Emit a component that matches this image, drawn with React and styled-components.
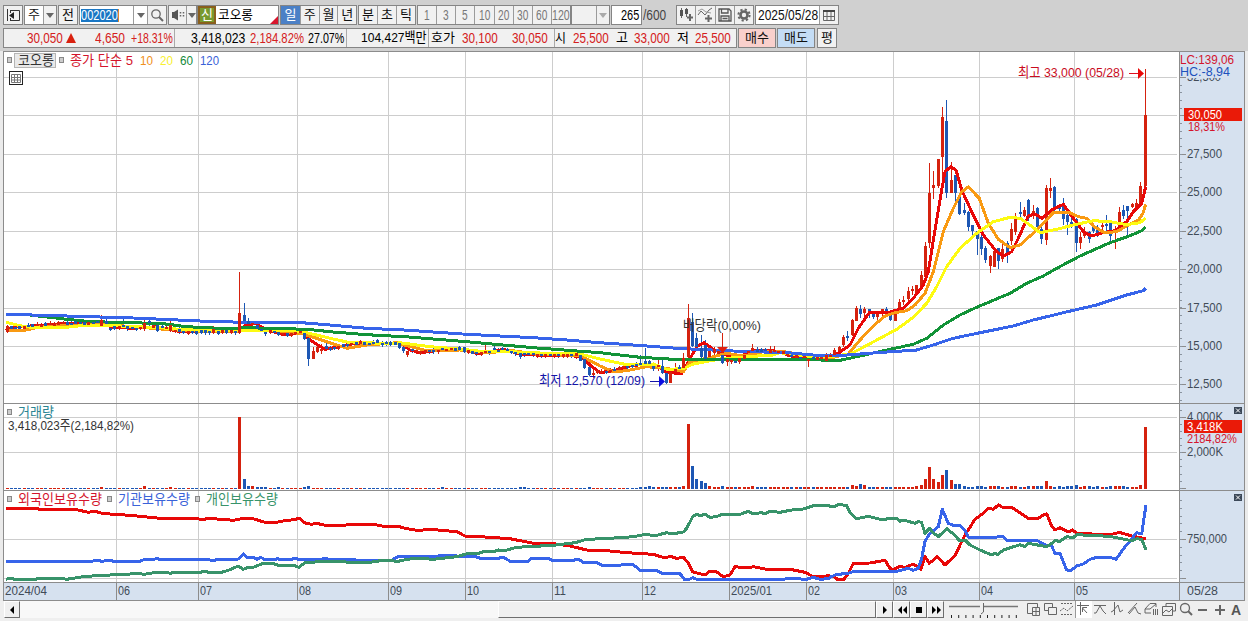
import { useLayoutEffect, useRef, useState } from "react";
import styled, { createGlobalStyle } from "styled-components";

const GlobalStyle = createGlobalStyle`
  * {
    box-sizing: border-box;
  }
  body {
    margin: 0;
    background: #ebebeb;
    overflow: hidden;
    font-family: "Liberation Sans", "Noto Sans CJK KR", sans-serif;
  }
`;
const Page = styled.div`
  width: 1248px;
  height: 621px;
  display: flex;
  flex-direction: column;
`;
const Header = styled.div`
  height: 51px;
  background: #d0d0d0;
  padding: 5px 0 0 3px;
  display: flex;
  flex-direction: column;
  gap: 3px;
`;
const Row = styled.div`
  display: flex;
  height: 20px;
`;
const Box = styled.div`
  display: flex;
  flex: none;
  width: ${(p) => p.$w}px;
  height: 20px;
  margin-left: ${(p) => p.$ml || 0}px;
  border: 1px solid #858585;
  background: ${(p) => p.$bg || "#f1f1f1"};
`;
const Cell = styled.div`
  display: flex;
  flex: ${(p) => (p.$w ? "none" : "1")};
  width: ${(p) => (p.$w ? p.$w + "px" : "auto")};
  align-items: center;
  justify-content: ${(p) => p.$align || "center"};
  background: ${(p) => p.$bg || "transparent"};
  color: ${(p) => p.$color || "#111"};
  & + & {
    border-left: 1px solid #9b9b9b;
  }
`;
const Badge = styled.div`
  display: flex;
  align-items: center;
  justify-content: center;
  width: 18px;
  height: 18px;
  color: #fff;
  background: #78992f;
  border: 2px solid #8a5f1c;
`;
const Corner = styled.i`
  align-self: flex-end;
  margin-left: auto;
  border-left: 8px solid transparent;
  border-bottom: 8px solid #d8142c;
`;
const Arrow = styled.i`
  border: 4px solid transparent;
  border-top: 5px solid ${(p) => p.$color || "#666"};
  border-bottom: 0;
`;
const Selected = styled.div`
  display: flex;
  align-items: center;
  height: 13px;
  margin-left: 1px;
  background: #1976c4;
  color: #fff;
  border-right: 1px solid #e0862c;
`;
const Quote = styled.div`
  display: flex;
  align-items: center;
  width: 734px;
  height: 20px;
  flex: none;
  border: 1px solid #858585;
  background: #f1f1f1;
`;
const Line = styled.i`
  width: 1px;
  height: 18px;
  margin-left: ${(p) => p.$ml}px;
  background: #aaa;
`;
const Up = styled.i`
  margin-left: 3px;
  border: 5.5px solid transparent;
  border-bottom: 10px solid #d9210f;
  border-top: 0;
`;
const FitBox = styled.span`
  display: block;
  flex: none;
  align-self: center;
  width: ${(p) => p.$w}px;
  margin-left: ${(p) => p.$ml || 0}px;
  font-size: ${(p) => p.$size || 14}px;
  line-height: 16px;
  color: ${(p) => p.$color || "inherit"};
  white-space: nowrap;
`;
const FitText = styled.span`
  display: inline-block;
  transform-origin: 0 50%;
`;

// condenses the text to the width of its column
const Fit = ({ children, w, ml, color, size }) => {
  const ref = useRef(null);
  const [scale, setScale] = useState(1);
  useLayoutEffect(() => {
    setScale(w / ref.current.offsetWidth);
  }, [w, children]);
  return (
    <FitBox $w={w} $ml={ml} $color={color} $size={size}>
      <FitText ref={ref} style={{ transform: `scaleX(${scale})` }}>
        {children}
      </FitText>
    </FitBox>
  );
};

const Icon = ({ w = 16, h = 16, children }) => (
  <svg
    width={w}
    height={h}
    viewBox={`0 0 ${w} ${h}`}
    fill="none"
    stroke="#666"
    strokeWidth="1"
  >
    {children}
  </svg>
);

const Toolbar = () => (
  <Row>
    <Box $w={20}>
      <Cell>
        <Icon>
          <path d="M5 3.5H14.5V13.5H5M2.5 2V14" stroke="#333" />
          <path d="M5.5 3V6M5.5 11V14" stroke="#333" />
          <path d="M9 5V12L4 8.5Z" fill="#222" stroke="none" />
        </Icon>
      </Cell>
    </Box>
    <Box $w={33} $ml={1} $bg="#fff">
      <Cell $w={18}>
        <Fit w={12} size={13}>주</Fit>
      </Cell>
      <Cell $bg="#f1f1f1">
        <Arrow />
      </Cell>
    </Box>
    <Box $w={20} $ml={1}>
      <Cell>
        <Fit w={12} size={13}>전</Fit>
      </Cell>
    </Box>
    <Box $w={88} $ml={1} $bg="#fff">
      <Cell $w={53} $align="flex-start">
        <Selected>
          <Fit w={37}>002020</Fit>
        </Selected>
      </Cell>
      <Cell $w={14}>
        <Arrow />
      </Cell>
      <Cell $bg="#f1f1f1">
        <Icon>
          <circle cx="7" cy="7" r="4.2" strokeWidth="1.3" />
          <path d="M10 10L14 14" strokeWidth="2" />
        </Icon>
      </Cell>
    </Box>
    <Box $w={29} $ml={1}>
      <Cell $w={17}>
        <Icon w={15}>
          <path d="M2 5H4L8 2.5V13.5L4 11H2Z" fill="#555" stroke="none" />
          <path d="M10.5 5V11M13.5 5V11" strokeWidth="1.5" strokeDasharray="1.5 1.5" />
        </Icon>
      </Cell>
      <Cell>
        <Arrow />
      </Cell>
    </Box>
    <Box $w={82} $bg="#fff">
      <Badge>
        <Fit w={12} size={13}>신</Fit>
      </Badge>
      <Fit w={35} ml={2} size={13}>
        코오롱
      </Fit>
      <Corner />
    </Box>
    <Box $w={77} $ml={1}>
      <Cell $w={19} $bg="#4b80c6" $color="#fff">
        <Fit w={12} size={13}>일</Fit>
      </Cell>
      {["주", "월", "년"].map((t) => (
        <Cell key={t}>
          <Fit w={12} size={13}>{t}</Fit>
        </Cell>
      ))}
    </Box>
    <Box $w={58} $ml={1}>
      {["분", "초", "틱"].map((t) => (
        <Cell key={t}>
          <Fit w={12} size={13}>{t}</Fit>
        </Cell>
      ))}
    </Box>
    <Box $w={154} $ml={1}>
      {["1", "3", "5", "10", "20", "30", "60", "120"].map((t) => (
        <Cell key={t} $color="#777">
          <Fit w={t.length * 5.8}>{t}</Fit>
        </Cell>
      ))}
    </Box>
    <Box $w={39}>
      <Cell $w={24} />
      <Cell>
        <Arrow $color="#aaa" />
      </Cell>
    </Box>
    <Box $w={31} $ml={1} $bg="#fff">
      <Fit w={18} ml={9}>
        265
      </Fit>
    </Box>
    <Fit w={23} ml={1} color="#444">
      /600
    </Fit>
    <Box $w={78} $ml={10}>
      <Cell>
        <Icon>
          <path d="M3.5 1V11M8.5 1V10" />
          <path d="M2 3H5V9H2ZM7 2H10V7H7Z" fill="#555" stroke="none" />
          <path d="M12 7V14M9 10.5H15" strokeWidth="2" />
        </Icon>
      </Cell>
      <Cell>
        <Icon>
          <path d="M1 8L4 4L8 8L12 3L15 1" />
          <path d="M1 4L5 2L9 5L14 6" stroke="#999" />
          <path d="M11.5 8V15M8 11.5H15" strokeWidth="2" />
        </Icon>
      </Cell>
      <Cell>
        <Icon>
          <path
            d="M2 2H12L14 4V14H2ZM4.5 2V6H11V2M4 14V9H12V14M5.5 11.5H10.5"
            stroke="#555"
            strokeWidth="1.3"
          />
        </Icon>
      </Cell>
      <Cell>
        <Icon>
          <circle cx="8" cy="8" r="3.5" strokeWidth="2.6" />
          <circle cx="8" cy="8" r="5.6" strokeWidth="2" strokeDasharray="2.2 2.2" />
        </Icon>
      </Cell>
    </Box>
    <Box $w={84} $ml={1} $bg="#fff">
      <Cell $w={63} $align="flex-start">
        <Fit w={60} ml={2}>
          2025/05/28
        </Fit>
      </Cell>
      <Cell $bg="#f1f1f1">
        <Icon w={14} h={14}>
          <path d="M1.5 3.5H12.5V12.5H1.5ZM1 8.5H13M5 4V12M9 4V12" />
          <path d="M1 3H13" stroke="#444" strokeWidth="2" />
        </Icon>
      </Cell>
    </Box>
  </Row>
);

const RED = "#d42020";

const QuoteBar = () => (
  <Row>
    <Quote>
      <Fit w={36} ml={23} color={RED}>30,050</Fit>
      <Up />
      <Fit w={30} ml={19} color={RED}>4,650</Fit>
      <Fit w={42} ml={6} color={RED}>+18.31%</Fit>
      <Line $ml={1} />
      <Fit w={54} ml={16}>3,418,023</Fit>
      <Fit w={54} ml={5} color={RED}>2,184.82%</Fit>
      <Fit w={36} ml={4}>27.07%</Fit>
      <Line $ml={2} />
      <Fit w={66} ml={14} size={13.5}>104,427백만</Fit>
      <Line $ml={1} />
      <Fit w={24} ml={2} size={13}>호가</Fit>
      <Fit w={36} ml={7} color={RED}>30,100</Fit>
      <Fit w={36} ml={14} color={RED}>30,050</Fit>
      <Line $ml={6} />
      <Fit w={11} size={13}>시</Fit>
      <Fit w={36} ml={7} color={RED}>25,500</Fit>
      <Fit w={12} ml={7} size={13}>고</Fit>
      <Fit w={36} ml={6} color={RED}>33,000</Fit>
      <Fit w={12} ml={7} size={13}>저</Fit>
      <Fit w={36} ml={6} color={RED}>25,500</Fit>
    </Quote>
    <Box $w={38} $ml={1} $bg="#f9d0cc">
      <Cell><Fit w={24} size={13}>매수</Fit></Cell>
    </Box>
    <Box $w={38} $ml={1} $bg="#c4ddf6">
      <Cell><Fit w={24} size={13}>매도</Fit></Cell>
    </Box>
    <Box $w={20} $ml={2}>
      <Cell><Fit w={12} size={13}>평</Fit></Cell>
    </Box>
  </Row>
);

/* ---------- chart data ---------- */

const STEP = 4.3115;
const candleX = (i) => Math.floor(7 + i * STEP);

// "x,y x,y" in thirds of a pixel, counted from an origin
const seg = (ox, oy, str) =>
  str
    .trim()
    .split(/\s+/)
    .map((s) => s.split(",").map(Number))
    .map(([x, y]) => [ox + x / 3, oy + y / 3]);

const ma5 = [
  ...seg(0, 260, "18,212 40,202 120,196 200,190 300,188 340,202 400,205 470,200 540,215 640,216 715,216 735,196 765,190 800,210 850,224 905,218 930,240 975,268 1010,262 1060,250 1190,250"),
  ...seg(400, 290, "0,158 30,180 60,188 120,180 180,176 230,190 270,188 310,178 360,192 420,196 500,196 545,200 570,225 600,248 640,242 690,228 740,222 780,232 800,248 845,250 865,215 890,170 912,158 940,178 970,192 1000,202 1030,195 1060,180 1110,180 1140,186"),
  ...seg(780, 90, "40,800 140,806 175,790 210,765 235,715 268,668 300,668 330,666 370,655 400,625 430,585 445,545 465,420 485,300 495,245 512,230 528,240 545,300 575,365 610,435 650,485 670,498 695,485 715,445 745,378 765,372 785,385 815,360 850,343 880,385 910,425 935,438 970,428 1005,422 1040,395 1060,365 1085,340 1097,290"),
];
const ma10 = [
  ...seg(0, 260, "18,212 80,210 120,200 180,197 300,193 400,200 520,210 640,215 720,214 760,205 860,215 910,222 980,245 1040,265 1100,255 1190,248"),
  ...seg(400, 290, "0,162 80,182 180,180 260,188 340,182 420,194 540,196 600,228 640,245 680,242 740,230 800,235 850,245 870,215 920,205 980,190 1030,198 1090,185"),
  ...seg(780, 90, "0,783 80,797 140,806 205,792 240,750 280,708 315,678 345,668 380,662 405,645 435,610 460,545 490,425 520,355 545,305 565,291 598,325 625,400 655,448 690,473 720,465 770,420 820,368 870,368 895,380 920,385 945,412 975,428 1010,425 1050,402 1075,390 1088,372 1097,343"),
];
const ma20 = [
  ...seg(0, 260, "18,187 60,197 110,204 200,202 260,195 340,197 480,203 540,208 640,212 720,212 820,212 890,213 920,218 1000,237 1050,248 1190,250"),
  ...seg(400, 290, "0,158 90,170 190,178 250,185 330,185 440,190 540,192 600,207 680,224 760,222 800,238 850,236 880,222 960,207 1040,200 1120,195"),
  ...seg(780, 90, "0,788 80,798 150,800 210,792 250,772 300,745 350,718 400,682 440,640 470,590 500,530 540,475 590,430 640,395 690,382 720,385 750,405 780,428 830,418 880,405 940,392 990,395 1040,404 1080,398 1097,384"),
];
const ma60 = [
  ...seg(0, 260, "18,163 90,165 200,178 260,184 370,188 480,190 560,200 680,206 740,203 920,208 1000,216 1100,224 1190,229"),
  ...seg(400, 290, "0,139 200,155 400,173 600,188 720,202 840,209 1120,208"),
  ...seg(780, 90, "0,808 120,810 180,811 240,798 320,780 400,763 440,745 490,705 540,675 590,652 690,610 740,580 790,558 830,535 900,498 990,458 1050,437 1085,422 1097,411"),
];
const ma120 = [
  ...seg(0, 260, "18,163 170,167 400,174 600,183 700,186 880,186 1000,196 1100,205 1190,209"),
  ...seg(400, 290, "0,119 200,133 400,143 500,150 600,158 700,165 830,175 1000,183 1120,187"),
  ...seg(780, 90, "0,786 100,795 200,795 320,786 410,780 460,765 520,745 600,728 700,708 760,690 850,668 950,645 1040,615 1090,602 1097,595"),
];
const foreign = [
  ...seg(0, 400, "18,325 110,325 120,329 230,329 265,337 285,334 310,341 350,343 410,348 480,355 590,355 605,360 625,355 700,361 730,355 755,355 795,367 830,367 860,361 885,359 897,354 915,369 935,373 950,370 975,376 1035,376 1045,373 1120,373 1150,379 1195,379 1215,385 1250,391"),
  ...seg(420, 400, "0,391 30,388 110,395 135,408 180,410 270,416 340,430 400,431 450,438 500,450 560,452 620,458 700,463 735,474 750,469 770,475 790,472 805,488 818,516 855,525 868,514 890,516 910,530 930,525 945,500 980,504 1000,500 1050,510 1110,508 1155,517 1180,530 1200,531 1225,527"),
  ...seg(830, 400, "12,530 25,540 42,538 55,520 70,490 120,489 165,481 180,505 190,509 210,498 225,503 250,492 272,508 285,470 298,490 322,470 345,495 375,466 405,405 435,358 460,340 475,325 490,328 505,315 520,323 545,322 595,355 625,355 640,345 650,342 665,378 675,390 690,383 715,396 727,390 740,399 800,403 850,402 868,397 905,408 930,413 948,416"),
];
const agency = [
  ...seg(0, 400, "18,484 275,484 290,480 305,484 330,481 340,484 420,484 432,479 460,479 470,475 480,479 625,479 640,482 650,479 715,477 730,462 742,472 760,472 770,478 782,472 795,479 820,480 832,476 845,480 870,479 885,475 900,479 960,479 975,475 990,479 1060,479 1090,482 1175,481 1195,469 1250,470"),
  ...seg(420, 400, "0,469 50,469 65,466 110,468 165,469 180,475 235,475 250,471 270,484 325,484 335,475 385,475 395,481 460,481 475,477 490,487 530,487 545,496 600,496 610,493 640,494 660,511 710,511 725,520 780,521 793,538 810,537 818,533 830,538 1090,538 1105,535 1160,538 1180,532 1200,538 1225,536"),
  ...seg(830, 400, "0,532 20,523 50,521 70,515 200,514 235,505 250,511 265,505 275,475 285,425 298,402 325,380 337,328 355,370 370,376 390,376 405,392 415,411 500,411 518,408 530,421 620,421 650,437 663,433 675,460 690,461 710,510 725,510 740,498 760,492 780,478 800,472 840,472 858,478 880,447 920,398 935,402 948,314"),
];
const personal = [
  ...seg(0, 400, "18,538 30,535 45,538 105,538 120,535 185,535 200,538 250,530 300,526 360,524 420,520 432,524 445,520 495,516 510,520 525,517 600,517 615,514 625,517 665,517 685,511 715,498 730,508 745,502 760,502 790,490 820,491 840,497 880,496 897,502 915,488 960,485 1110,487 1150,481 1195,484 1220,478 1250,475"),
  ...seg(420, 400, "0,475 40,478 110,470 145,460 170,462 190,455 220,455 235,450 250,453 290,442 400,436 465,428 500,418 550,416 640,410 670,404 710,406 740,398 755,402 790,396 800,385 818,350 830,343 840,347 855,343 870,352 890,350 905,343 960,343 985,334 1000,341 1025,338 1035,341 1050,334 1080,337 1115,330 1150,327 1180,317 1225,316"),
  ...seg(830, 400, "0,319 15,319 25,314 50,316 60,338 80,356 115,349 160,360 180,354 200,356 210,364 220,360 255,370 265,364 275,368 285,400 298,385 310,398 325,410 350,386 370,402 390,423 405,420 420,435 450,450 485,465 495,460 503,464 520,450 570,434 585,440 595,430 650,440 665,430 675,422 690,424 710,410 730,413 740,404 820,408 850,411 905,422 920,416 935,418 948,450"),
];

// index: high, top, bottom, low (thirds of a pixel from the origin), r = up, b = down
const parse = (oy, str) =>
  str
    .trim()
    .split("\n")
    .map((l) => {
      const [i, h, t, b, lo, c] = l.trim().split(/\s+/);
      return [+i, ...[h, t, b, lo].map((v) => oy + v / 3), c];
    });

const bigCandles = [
  ...parse(
    260,
    `0 195 198 216 218 r
    8 190 194 198 206 r
    16 184 184 192 198 b
    17 184 185 190 202 b
    22 165 180 198 200 r
    23 176 184 192 200 b
    24 196 204 206 214 b
    27 174 196 198 206 b
    32 178 190 208 212 r
    33 178 184 190 200 b
    35 190 196 214 216 b
    38 183 196 214 216 r
    40 196 206 216 222 b
    48 198 208 220 222 r
    53 204 214 218 224 b
    54 36 158 220 222 r
    55 128 165 182 190 b
    56 175 182 192 196 b
    57 182 188 194 198 r
    58 188 196 206 210 b
    59 202 206 214 216 b
    60 212 216 222 228 b
    68 208 212 220 224 r
    69 214 220 236 240 b
    70 232 234 296 318 b
    71 262 272 296 298 r
    72 248 260 276 278 r
    73 252 266 270 282 r
    74 250 258 266 270 b
    86 236 240 250 252 b`
  ),
  ...parse(
    290,
    `91 156 158 174 178 b
    92 168 170 184 188 b
    93 182 184 196 200 r
    106 170 172 186 190 b
    111 165 182 186 192 r
    113 164 174 178 186 b
    119 184 190 200 206 b
    132 184 188 198 208 r
    133 190 194 212 214 b
    134 205 208 235 237 b
    135 230 232 255 258 b
    136 238 250 254 264 r
    147 195 218 225 236 b
    148 175 214 222 232 b
    149 210 214 222 226 b
    150 222 228 236 244 b
    151 200 226 230 244 r
    152 210 228 250 252 b
    153 245 250 280 283 b
    154 235 246 278 278 r
    155 220 238 246 248 r
    156 226 230 234 240 b
    157 190 205 235 240 r
    158 42 85 200 210 r
    159 68 95 168 172 b
    160 130 145 170 176 b
    161 135 175 202 210 b
    162 150 165 206 210 b
    163 176 184 202 208 r
    164 172 178 188 196 r
    165 178 184 192 200 r
    166 190 195 218 222 b
    167 200 208 215 228 r
    168 204 210 216 222 r
    169 200 212 216 220 b
    170 192 204 216 222 r
    171 188 196 208 212 r
    173 162 174 182 188 r
    174 170 178 186 190 b
    177 168 178 188 202 r
    178 168 180 184 190 r`
  ),
  ...parse(
    90,
    `186 800 808 814 832 r
    190 790 795 812 814 r
    191 790 795 800 806 r
    192 774 780 794 800 r
    193 768 770 784 788 r
    194 736 740 764 772 r
    195 722 738 744 754 b
    196 686 690 734 738 r
    197 648 654 692 694 r
    198 646 656 672 684 b
    199 652 656 670 680 r
    200 656 658 670 684 b
    201 662 672 682 686 b
    202 664 666 680 690 r
    203 656 658 672 680 r
    204 652 658 666 672 b
    205 662 668 690 694 b
    206 670 672 694 694 r
    207 628 636 660 670 r
    208 618 630 636 646 r
    209 590 602 628 634 r
    210 588 597 603 614 r
    211 584 586 610 618 r
    212 543 556 592 598 r
    213 455 468 560 570 r
    214 220 308 458 474 r
    215 242 286 294 326 r
    216 206 208 288 294 r
    217 50 80 200 296 r
    218 30 94 308 324 b
    219 215 270 308 308 r
    220 255 256 310 345 b
    221 318 318 372 374 b
    222 338 360 368 374 b
    223 364 366 412 422 b
    224 405 406 422 446 b
    225 422 424 446 494 b
    226 424 440 478 494 b
    227 468 474 510 520 b
    228 494 498 528 548 r
    229 474 482 530 532 r
    230 474 474 514 536 b
    231 452 478 508 516 r
    232 452 458 496 518 b
    233 398 418 452 464 r
    234 370 378 426 434 r
    235 335 366 372 390 b
    236 350 360 378 382 r
    237 326 330 384 392 b
    238 346 362 370 388 r
    239 350 354 410 420 b
    240 405 416 446 462 b
    241 285 294 450 466 r
    242 265 294 304 325 r
    243 288 290 356 362 b
    244 344 350 358 372 b
    245 324 343 388 405 b
    246 372 376 396 434 b
    247 380 396 402 414 b
    248 385 386 458 486 b
    249 425 440 458 476 r
    250 412 430 438 445 r
    251 424 426 446 458 b
    252 405 410 422 430 b
    253 405 418 432 440 b
    254 400 405 412 430 r
    255 374 403 408 425 b
    256 395 398 438 455 b
    257 408 416 430 476 r
    258 350 365 412 420 r
    259 346 359 377 388 b
    260 348 348 362 437 b
    261 338 342 352 355 r
    262 328 340 350 352 r
    263 277 289 340 345 r
    264 -63 76 288 290 r`
  ),
];

const yAt = (line, x) => {
  const k = line.findIndex((p) => p[0] >= x);
  if (k <= 0) return line[0][1];
  const [x0, y0] = line[k - 1];
  const [x1, y1] = line[k];
  return y0 + ((y1 - y0) * (x - x0)) / (x1 - x0);
};
const noise = (i) => {
  const v = Math.sin(i * 127.1) * 43758.5453;
  return v - Math.floor(v);
};
const byIndex = Object.fromEntries(bigCandles.map((c) => [c[0], c]));
const candles = Array.from({ length: 265 }, (_, i) => {
  if (byIndex[i]) return byIndex[i];
  const y = yAt(ma5, 7 + i * STEP) + (noise(i) - 0.5) * 1.5;
  const body = noise(i + 400) > 0.6 ? 1.5 : 1;
  return [i, y - 2 - noise(i + 50), y - body, y + body, y + 2 + noise(i + 90), noise(i + 7) > 0.5 ? "r" : "b"];
});

const volumeTops = {
  22: 261, 32: 258, 38: 261, 54: 51, 55: 237, 56: 258, 57: 258, 58: 261, 59: 261, 60: 261,
  63: 261, 69: 261, 70: 258, 101: 261, 119: 261, 120: 261, 135: 261, 149: 258, 157: 258,
  158: 72, 159: 198, 160: 237, 161: 243, 162: 249, 163: 258, 166: 258, 173: 258, 196: 256,
  197: 257, 198: 252, 199: 255, 212: 255, 213: 237, 214: 201, 215: 237, 216: 246, 217: 225,
  218: 210, 219: 240, 220: 252, 221: 252, 241: 243, 248: 255, 263: 255, 264: 82,
};
const volumeTop = (i) => {
  if (volumeTops[i]) return volumeTops[i];
  if (i > 207) return 257 + Math.round(noise(i)) * 4;
  return i > 146 ? 261 : 264;
};

const months = [
  [116, "06"], [198, "07"], [297, "08"], [388, "09"], [465, "10"], [552, "11"],
  [642, "12"], [729, "2025/01"], [806, "02"], [893, "03"], [979, "04"], [1074, "05"],
];
const priceGrid = [77, 115, 154, 192, 231, 269, 308, 346, 384];
const priceLabels = ["27,500", "25,000", "22,500", "20,000", "17,500", "15,000", "12,500"];
const colors = { r: "#d5220f", b: "#1d57b4" };

/* ---------- chart ---------- */

const ChartSvg = styled.svg`
  display: block;
  flex: none;
  margin-left: 3px;
  font-family: "Liberation Sans", "Noto Sans CJK KR", sans-serif;
  font-size: 13.5px;
`;
const Curve = styled.polyline`
  fill: none;
  stroke: ${(p) => p.$color};
  stroke-width: 3;
  stroke-linejoin: round;
`;
const Label = ({ x, y, w, fill = "#414b57", children }) => (
  <text x={x} y={y} textLength={w} lengthAdjust="spacingAndGlyphs" fill={fill}>
    {children}
  </text>
);
const Legend = ({ x, y }) => (
  <rect x={x + 0.5} y={y + 0.5} width="4" height="5" fill="#ccc" stroke="#888" />
);
const Close = ({ y }) => (
  <g>
    <rect x="1234" y={y} width="8" height="7" fill="#3c4858" />
    <path d={`M1236 ${y + 1.5}l4 4m0 -4l-4 4`} stroke="#fff" />
  </g>
);
const Ticks = ({ from, to, step }) => {
  const list = [];
  for (let y = from; y < to; y += step) list.push(Math.round(y));
  return list.map((y) => <rect key={y} x="1180" y={y} width="2" height="1" fill="#8a94a0" />);
};
const toPoints = (line) => line.map(([x, y]) => `${x.toFixed(1)},${y.toFixed(1)}`).join(" ");

const Chart = () => (
  <ChartSvg width="1242" height="550" viewBox="3 51 1242 550">
    <rect x="3" y="51" width="1242" height="550" fill="#8c8c8c" />
    <rect x="4" y="52" width="1175" height="530" fill="#fff" />
    <rect x="1180" y="52" width="64" height="548" fill="#d6e1ef" />
    <rect x="4" y="583" width="1175" height="17" fill="#d6e1ef" />
    <g fill="#cdcdcd">
      {months.map(([x]) => (
        <rect key={x} x={x} y="52" width="1" height="530" />
      ))}
      {[...priceGrid, 417, 452, 539, 578].map((y) => (
        <rect key={y} x="4" y={y} width="1173" height="1" />
      ))}
    </g>
    <g fill="#8c8c8c">
      <rect x="4" y="403" width="1240" height="1" />
      <rect x="4" y="490" width="1240" height="1" />
      <rect x="1180" y="582" width="64" height="1" />
      {months.map(([x]) => (
        <rect key={x} x={x} y="583" width="1" height="17" />
      ))}
      {[...priceGrid, 417, 452, 488, 539, 578].map((y) => (
        <rect key={y} x="1180" y={y} width="6" height="1" />
      ))}
    </g>
    <Ticks from={84.7} to={402} step={7.68} />
    <Ticks from={410} to={488} step={7.06} />
    <Ticks from={500} to={580} step={7.8} />

    <g shapeRendering="crispEdges">
      {candles.map(([i, h, t, b, lo, c]) => {
        const top = Math.round(t);
        return (
          <g key={i} fill={colors[c]}>
            <rect x={candleX(i)} y={Math.round(h)} width="1" height={Math.max(1, Math.round(lo) - Math.round(h))} />
            <rect x={candleX(i) - 1} y={top} width="3" height={Math.max(2, Math.round(b) - top)} />
          </g>
        );
      })}
      {candles.map(([i, , , , , c]) => {
        const top = Math.round(400 + volumeTop(i) / 3);
        return <rect key={i} x={candleX(i) - 1} y={top} width="3" height={489 - top} fill={colors[c]} />;
      })}
    </g>
    <g shapeRendering="crispEdges">
      <Curve $color="#e80808" points={toPoints(ma5)} />
      <Curve $color="#f99a12" points={toPoints(ma10)} />
      <Curve $color="#fdfb12" points={toPoints(ma20)} />
      <Curve $color="#129338" points={toPoints(ma60)} />
      <Curve $color="#3764ea" points={toPoints(ma120)} />
    </g>
    {/* the small early bodies stay visible over the averages */}
    <g shapeRendering="crispEdges">
      {candles
        .filter(([i]) => i < 200)
        .map(([i, , t, b, , c]) => (
          <rect
            key={i}
            x={candleX(i) - 1}
            y={Math.round(t)}
            width="3"
            height={Math.max(2, Math.round(b) - Math.round(t))}
            fill={colors[c]}
          />
        ))}
    </g>
    <g shapeRendering="crispEdges">
      <Curve $color="#e80808" points={toPoints(foreign)} />
      <Curve $color="#3764ea" points={toPoints(agency)} />
      <Curve $color="#38936a" points={toPoints(personal)} />
    </g>

    <Legend x={7} y={57} />
    <rect x="14.5" y="53.5" width="41" height="14" fill="#e9e9e9" stroke="#b5b5b5" />
    <Label x={18} y={65} w={36} fill="#333">코오롱</Label>
    <Legend x={59} y={57} />
    <Label x={70} y={65} w={63} fill="#d4142c">종가 단순 5</Label>
    <Label x={140} y={65} w={13} fill="#ef9020">10</Label>
    <Label x={160} y={65} w={13} fill="#f8f030">20</Label>
    <Label x={180} y={65} w={13} fill="#128a38">60</Label>
    <Label x={200} y={65} w={19} fill="#3a62d8">120</Label>
    <rect x="9.5" y="71.5" width="13" height="13" fill="#fff" stroke="#222" />
    <path d="M11.5 74.5H20.5V82.5H11.5ZM11.5 77.5H20.5M14.5 74.5V82.5M17.5 74.5V82.5M11.5 80H20.5" fill="none" stroke="#777" />

    <Label x={1018} y={77} w={106} fill="#c90c1e">최고 33,000 (05/28)</Label>
    <path d="M1129 73.5H1139" stroke="#e01020" />
    <path d="M1138 68L1144 73.5L1138 79Z" fill="#e80808" />
    <Label x={539} y={385} w={106} fill="#1414a8">최저 12,570 (12/09)</Label>
    <path d="M650 381.5H660" stroke="#1414a8" />
    <path d="M659 376L665 381.5L659 387Z" fill="#0c0ce0" />
    <Label x={683} y={330} w={78} fill="#333">배당락(0,00%)</Label>
    <path d="M722.5 333V348" stroke={colors.r} />
    <path d="M717 347H728L722.5 353Z" fill="#e02010" />

    <Label x={1187} y={81} w={34}>32,500</Label>
    <rect x="1187" y="66" width="56" height="12" fill="#d6e1ef" />
    <Label x={1180} y={64} w={54} fill="#d4142c">LC:139,06</Label>
    <Label x={1180} y={76} w={50} fill="#1c50bc">HC:-8,94</Label>
    <rect x="1184" y="108" width="58" height="13" fill="#ea1a08" />
    <Label x={1188} y={119} w={34} fill="#fff">30,050</Label>
    <Label x={1188} y={131} w={37} fill="#d4142c">18,31%</Label>
    {priceLabels.map((t, i) => (
      <Label key={t} x={1187} y={priceGrid[i + 2] + 4} w={35}>{t}</Label>
    ))}

    <Legend x={7} y={409} />
    <Label x={18} y={417} w={36} fill="#2b8593">거래량</Label>
    <Label x={8} y={430} w={126} fill="#333">3,418,023주(2,184,82%)</Label>
    <Label x={1187} y={421} w={36}>4,000K</Label>
    <rect x="1184" y="420" width="58" height="13" fill="#ea1a08" />
    <Label x={1187} y={431} w={36} fill="#fff">3,418K</Label>
    <Label x={1187} y={443} w={50} fill="#d4142c">2184,82%</Label>
    <Label x={1187} y={456} w={36}>2,000K</Label>
    <Close y={407} />

    <Legend x={7} y={496} />
    <Label x={18} y={504} w={84} fill="#d4142c">외국인보유수량</Label>
    <Legend x={107} y={496} />
    <Label x={118} y={504} w={72} fill="#3a62d8">기관보유수량</Label>
    <Legend x={195} y={496} />
    <Label x={206} y={504} w={72} fill="#38936a">개인보유수량</Label>
    <Label x={1187} y={543} w={40}>750,000</Label>
    <Close y={494} />

    <Label x={5} y={595} w={42}>2024/04</Label>
    {months.map(([x, t]) => (
      <Label key={x} x={x + 2} y={595} w={t.length > 2 ? 41 : 12}>{t}</Label>
    ))}
    <Label x={1187} y={595} w={31}>05/28</Label>
  </ChartSvg>
);

/* ---------- bottom bar ---------- */

const Footer = styled.div`
  display: flex;
  height: 20px;
  padding-left: 4px;
  background: #efefef;
`;
const Scroll = styled.div`
  display: flex;
  width: 872px;
  height: 17px;
  background: #f8f8f8;
`;
const Raised = styled.div`
  display: flex;
  align-items: center;
  justify-content: center;
  flex: none;
  width: ${(p) => p.$w}px;
  height: 17px;
  margin-left: ${(p) => p.$ml || 0}px;
  background: #f0f0f0;
  border: 1px solid;
  border-color: #fff #6e6e6e #6e6e6e #fff;
`;
const Slider = styled.div`
  width: 70px;
  margin-left: 5px;
`;
const Tools = styled.div`
  display: flex;
  align-items: center;
  margin-left: 5px;
  height: 17px;
`;
const Tool = styled.div`
  display: flex;
  width: 17px;
  height: 17px;
  background: ${(p) => (p.$active ? "#fff" : "transparent")};
  border-left: 1px solid ${(p) => (p.$active ? "#999" : "transparent")};
`;

const tools = [
  <path key="a" d="M7 12.5H2.5V2.5H12.5V6M7.5 6.5H14.5V14.5H7.5ZM11 7V14M8 10.5H14" />,
  <path key="b" d="M6 9.5H2.5V2.5H10.5V6M6.5 6.5H14.5V13.5H6.5Z" />,
  <path key="c" d="M2 2.5H14M2 13.5H14M1 10L5 7L8 10L14 5" strokeDasharray="2 1" />,
  <path key="d" d="M1 4.5H13M4.5 1V14M6.5 7L11 12M6.5 11V6.5H11" />,
  <path key="e" d="M1 4.5H13M1 12H3L7 5L10 10L13 13" />,
  <path key="f" d="M4.5 1V14M1 11L3 10L8 4L10 11L13 9" />,
  <path key="g" d="M1 12L10 2M2 13L8 6L11 12L14 13" />,
  <path key="h" d="M1 8L6 2.5H12V6M1 8V12H7M1 8H6L12 3M9.5 8V14M11.5 8V14M13.5 8V14" />,
  <path key="i" d="M5 5V2.5H14.5V10H12M1.5 5.5H11.5V14.5H1.5ZM2 12L5 9L8 11L11 8" />,
];

const BottomBar = () => (
  <Footer>
    <Scroll>
      <Raised $w={16}>
        <Icon w={8} h={8}>
          <path d="M6 0V8L2 4Z" fill="#000" stroke="none" />
        </Icon>
      </Raised>
      <Raised $w={378} $ml={478} />
    </Scroll>
    {["M3 1V9L7 5Z", "M5 1V9L1 5ZM10 1V9L6 5Z", "M2 2H8V8H2Z", "M1 1V9L5 5ZM6 1V9L10 5Z"].map((d) => (
      <Raised key={d} $w={17}>
        <Icon w={10} h={10}>
          <path d={d} fill="#000" stroke="none" />
        </Icon>
      </Raised>
    ))}
    <Slider>
      <Icon w={70} h={18}>
        <path d="M0 5.5H69" stroke="#777" strokeWidth="1.6" />
        <path d="M2 15.5H70" stroke="#222" strokeWidth="3" strokeDasharray="1 6.2" />
        <rect x="31" y="1" width="3" height="12" fill="#eee" stroke="none" />
        <path d="M34.5 2V11L32 13" stroke="#666" />
      </Icon>
    </Slider>
    <Tools>
      {tools.map((t, i) => (
        <Tool key={i} $active={i === 3}>
          <Icon>{t}</Icon>
        </Tool>
      ))}
      <Tool>
        <Icon>
          <circle cx="7" cy="7" r="4.5" strokeWidth="1.3" />
          <path d="M10 10L14 14" strokeWidth="2" />
        </Icon>
      </Tool>
      <Tool>
        <Icon>
          <path d="M3 9H12" strokeWidth="2" />
        </Icon>
      </Tool>
      <Tool>
        <Icon>
          <path d="M3 9H13M8 4V14" strokeWidth="2" />
        </Icon>
      </Tool>
      <Tool>
        <Fit w={10} ml={2} size={14} color="#555">
          <b>A</b>
        </Fit>
      </Tool>
    </Tools>
  </Footer>
);

export default function App() {
  return (
    <Page>
      <GlobalStyle />
      <Header>
        <Toolbar />
        <QuoteBar />
      </Header>
      <Chart />
      <BottomBar />
    </Page>
  );
}
